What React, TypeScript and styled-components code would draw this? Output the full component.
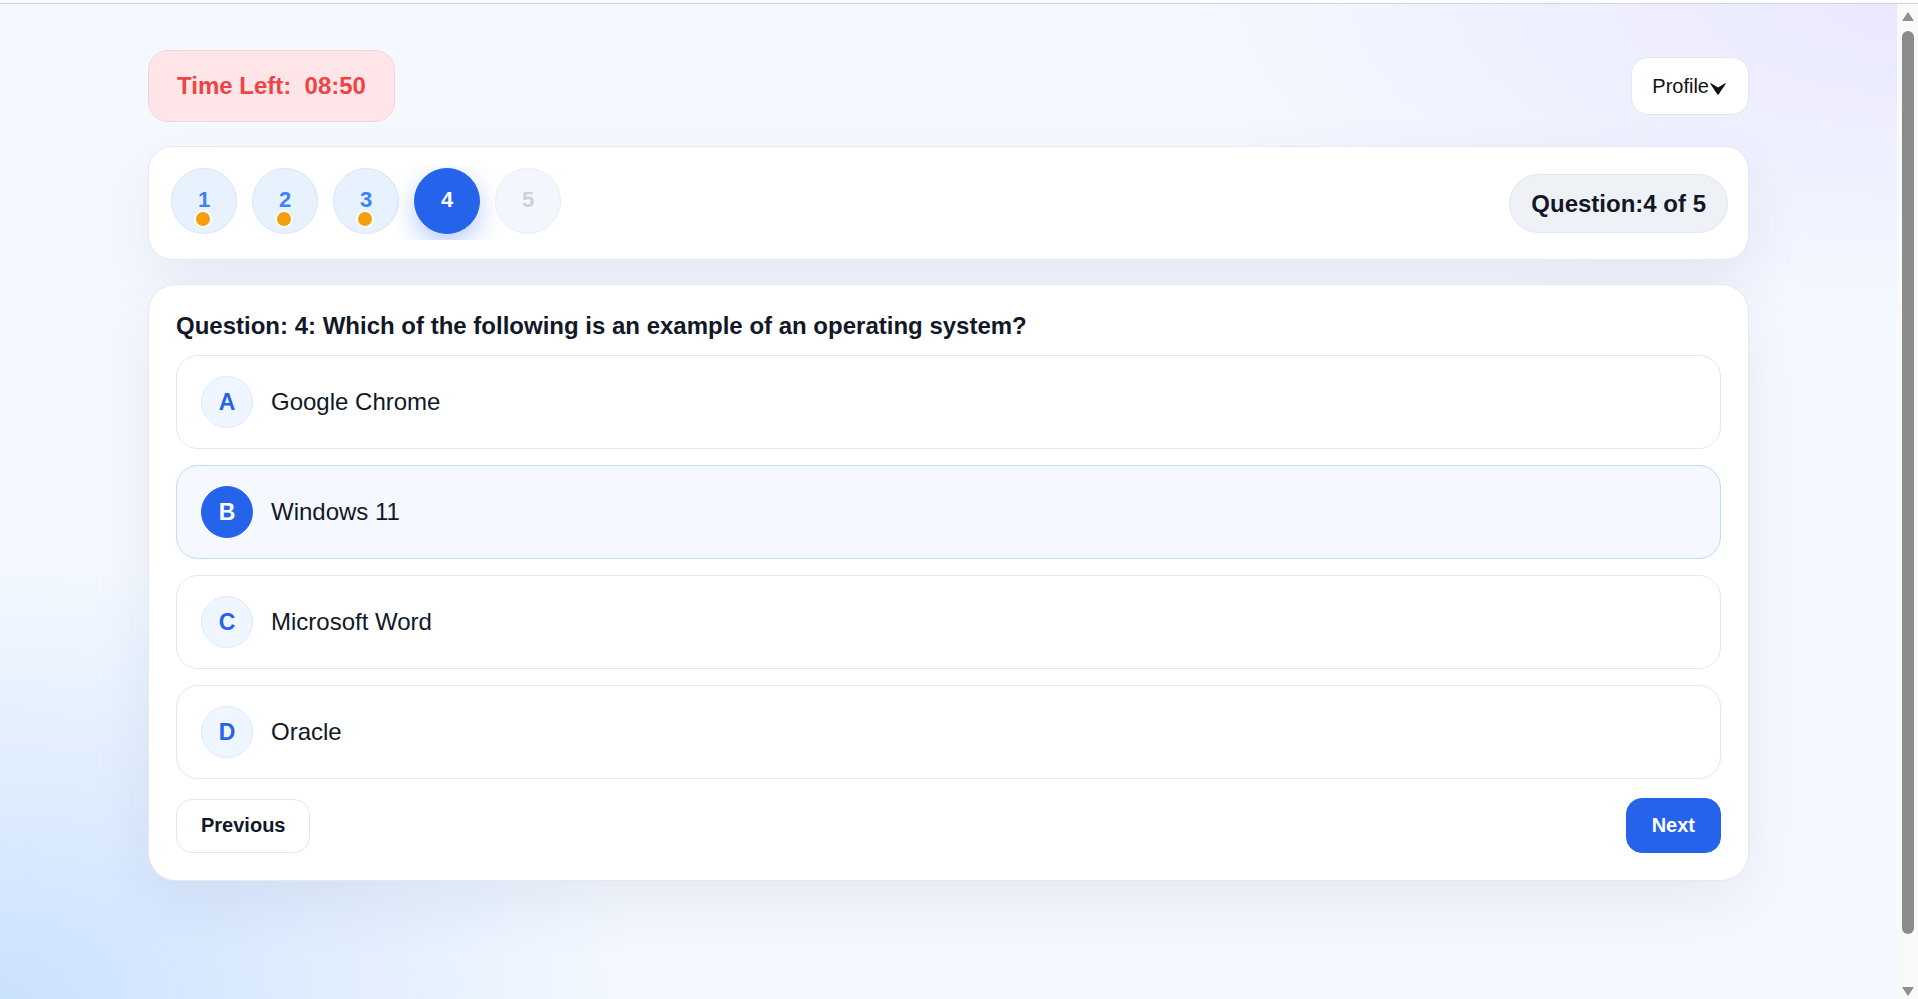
import React from "react";
import styled, { createGlobalStyle, css } from "styled-components";

const GlobalStyle = createGlobalStyle`
  html, body {
    margin: 0;
    padding: 0;
  }
  html {
    background:
      radial-gradient(ellipse 55% 45% at 100% 0%, rgba(221, 214, 254, 0.5), rgba(221, 214, 254, 0) 75%),
      radial-gradient(ellipse 45% 60% at 0% 100%, rgba(191, 219, 254, 0.8), rgba(191, 219, 254, 0) 75%),
      #f5f9ff;
    background-attachment: fixed;
  }
  body {
    font-family: "Liberation Sans", Arial, Helvetica, sans-serif;
    color: #111827;
  }
  * { box-sizing: border-box; }
`;

const TopRule = styled.div`
  height: 4px;
  background: #fbfcff;
  border-bottom: 1px solid #d4d4d8;
`;

const Page = styled.main`
  box-sizing: content-box;
  min-height: 100vh;
  padding: 46px 21px 18px 0;
`;

const Container = styled.div`
  width: 1601px;
  margin: 0 auto;
  display: flex;
  flex-direction: column;
  gap: 24px;
`;

const Scrollbar = styled.div`
  position: fixed;
  top: 4px;
  right: 0;
  bottom: 0;
  width: 21px;
  background: #f9f9f9;
  display: flex;
  flex-direction: column;
  align-items: center;
  padding: 8px 0 3px 1px;
`;

const ScrollArrow = styled.span<{ $down?: boolean }>`
  width: 0;
  height: 0;
  border-left: 6px solid transparent;
  border-right: 6px solid transparent;
  ${(p) =>
    p.$down
      ? css`border-top: 9px solid #8f8f8f;`
      : css`border-bottom: 9px solid #8f8f8f;`}
`;

const ScrollThumb = styled.span`
  width: 12px;
  height: 903px;
  margin: 10px 0 auto;
  border-radius: 6px;
  background: #8b8b8b;
`;

const Header = styled.header`
  display: flex;
  align-items: center;
  justify-content: space-between;
`;

const Timer = styled.div`
  padding: 21px 28px;
  border-radius: 20px;
  background: #fee6e8;
  border: 1px solid #fdd1d6;
  color: #ef4444;
  font-size: 24px;
  line-height: 28px;
  font-weight: 700;
  white-space: pre;
`;

const ProfileButton = styled.button`
  display: flex;
  align-items: center;
  padding: 16px 22px 16px 20px;
  border-radius: 17px;
  background: #ffffff;
  border: 1px solid #e5e7eb;
  font-family: inherit;
  font-size: 20px;
  line-height: 24px;
  color: #111111;
  cursor: pointer;
`;

const Chevron = styled.svg`
  width: 16px;
  height: 12px;
  margin-left: 1px;
  margin-top: 5px;
`;

const Card = styled.section<{ $pad: string; $radius: number }>`
  background: #ffffff;
  border: 1px solid #e6e8ee;
  border-radius: ${(p) => p.$radius}px;
  padding: ${(p) => p.$pad};
  box-shadow: 0 22px 60px rgba(30, 41, 80, 0.07);
`;

const NavRow = styled.div`
  display: flex;
  align-items: center;
  justify-content: space-between;
`;

const Steps = styled.div`
  display: flex;
  gap: 15px;
  padding: 2px 30px 6px 2px;
  margin-right: -28px;
  overflow-x: auto;
`;

type StepState = "answered" | "current" | "pending";

const stepStyles = {
  answered: css`
    background: #e8f1fe;
    border-color: #d7e6fb;
    color: #3b82f6;
  `,
  current: css`
    background: #2563eb;
    border-color: #2563eb;
    color: #ffffff;
    box-shadow: 0 10px 26px rgba(37, 99, 235, 0.32);
  `,
  pending: css`
    background: #f3f7fd;
    border-color: #e7eef9;
    color: #cbd2dc;
  `,
};

const Step = styled.button<{ $state: StepState }>`
  position: relative;
  flex: none;
  width: 66px;
  height: 66px;
  border-radius: 50%;
  border: 1px solid;
  font-family: inherit;
  font-size: 22px;
  font-weight: 700;
  display: flex;
  align-items: center;
  justify-content: center;
  padding: 0 0 2px;
  cursor: pointer;
  ${(p) => stepStyles[p.$state]}
`;

const Dot = styled.span`
  position: absolute;
  left: 50%;
  bottom: 5px;
  width: 18px;
  height: 18px;
  margin-left: -10px;
  border-radius: 50%;
  background: #f59e0b;
  border: 2px solid #ffffff;
`;

const Counter = styled.div`
  padding: 15px 21px;
  border-radius: 999px;
  background: #eef2f7;
  border: 1px solid #e2e8f0;
  font-size: 24px;
  line-height: 27px;
  font-weight: 700;
  color: #111827;
`;

const QuestionBody = styled.div`
  display: flex;
  flex-direction: column;
`;

const Title = styled.h2`
  margin: 0 0 15px;
  font-size: 24px;
  line-height: 28px;
  font-weight: 700;
  color: #111827;
`;

const Options = styled.div`
  display: flex;
  flex-direction: column;
  gap: 16px;
`;

const Option = styled.div<{ $selected: boolean }>`
  display: flex;
  align-items: center;
  gap: 18px;
  padding: 20px 24px;
  border-radius: 22px;
  border: 1px solid ${(p) => (p.$selected ? "#bfdbfe" : "#e5e7eb")};
  background: ${(p) => (p.$selected ? "#f5f9ff" : "#ffffff")};
  cursor: pointer;
`;

const Badge = styled.span<{ $selected: boolean }>`
  flex: none;
  width: 52px;
  height: 52px;
  border-radius: 50%;
  display: flex;
  align-items: center;
  justify-content: center;
  font-size: 23px;
  font-weight: 700;
  border: 1px solid ${(p) => (p.$selected ? "#2563eb" : "#dbeafe")};
  background: ${(p) => (p.$selected ? "#2563eb" : "#eff6ff")};
  color: ${(p) => (p.$selected ? "#ffffff" : "#2563eb")};
`;

const OptionText = styled.span`
  font-size: 24px;
  line-height: 28px;
  color: #111827;
`;

const Footer = styled.div`
  display: flex;
  justify-content: space-between;
  align-items: center;
  margin-top: 19px;
`;

const NavButton = styled.button<{ $primary?: boolean }>`
  height: ${(p) => (p.$primary ? 55 : 54)}px;
  padding: 0 ${(p) => (p.$primary ? 25 : 24)}px;
  border-radius: 16px;
  font-family: inherit;
  font-size: 20px;
  font-weight: 700;
  cursor: pointer;
  border: 1px solid ${(p) => (p.$primary ? "#2563eb" : "#e5e7eb")};
  background: ${(p) => (p.$primary ? "#2563eb" : "#ffffff")};
  color: ${(p) => (p.$primary ? "#ffffff" : "#111827")};
`;

const steps: { n: number; state: StepState; dot: boolean }[] = [
  { n: 1, state: "answered", dot: true },
  { n: 2, state: "answered", dot: true },
  { n: 3, state: "answered", dot: true },
  { n: 4, state: "current", dot: false },
  { n: 5, state: "pending", dot: false },
];

const options = [
  { key: "A", text: "Google Chrome" },
  { key: "B", text: "Windows 11" },
  { key: "C", text: "Microsoft Word" },
  { key: "D", text: "Oracle" },
];

export default function App() {
  const selected = "B";
  return (
    <>
      <GlobalStyle />
      <TopRule />
      <Page>
        <Container>
          <Header>
            <Timer>{"Time Left:  08:50"}</Timer>
            <ProfileButton>
              Profile
              <Chevron viewBox="0 0 16 12" aria-hidden="true">
                <path d="M0.4 0.9 Q0 0 1 0.3 L8 4.4 L15 0.3 Q16 0 15.6 0.9 L8.7 11.3 Q8 12.3 7.3 11.3 Z" fill="#111111" />
              </Chevron>
            </ProfileButton>
          </Header>

          <Card $pad="19px 20px" $radius={24}>
            <NavRow>
              <Steps>
                {steps.map((s) => (
                  <Step key={s.n} $state={s.state}>
                    {s.n}
                    {s.dot && <Dot />}
                  </Step>
                ))}
              </Steps>
              <Counter>Question:4 of 5</Counter>
            </NavRow>
          </Card>

          <Card $pad="27px" $radius={28}>
            <QuestionBody>
              <Title>Question: 4: Which of the following is an example of an operating system?</Title>
              <Options>
                {options.map((o) => (
                  <Option key={o.key} $selected={o.key === selected}>
                    <Badge $selected={o.key === selected}>{o.key}</Badge>
                    <OptionText>{o.text}</OptionText>
                  </Option>
                ))}
              </Options>
              <Footer>
                <NavButton>Previous</NavButton>
                <NavButton $primary>Next</NavButton>
              </Footer>
            </QuestionBody>
          </Card>
        </Container>
      </Page>
      <Scrollbar aria-hidden="true">
        <ScrollArrow />
        <ScrollThumb />
        <ScrollArrow $down />
      </Scrollbar>
    </>
  );
}
